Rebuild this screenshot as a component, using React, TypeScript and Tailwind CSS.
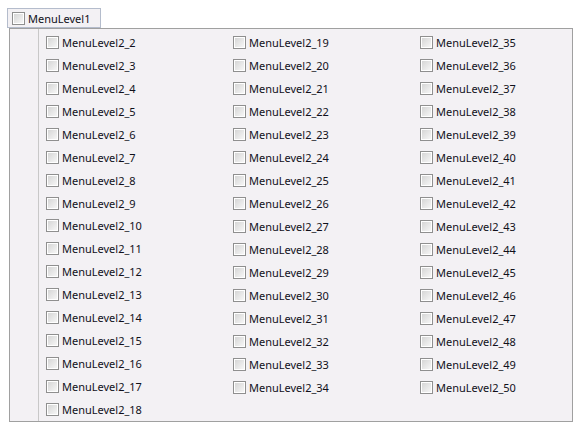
import React from "react";

const columns: number[][] = [
  Array.from({ length: 17 }, (_, i) => i + 2),
  Array.from({ length: 16 }, (_, i) => i + 19),
  Array.from({ length: 16 }, (_, i) => i + 35),
];

function Box() {
  return (
    <span className="w-[13px] h-[13px] shrink-0 border border-[#8f8f8f] bg-white p-px">
      <span className="block w-full h-full bg-gradient-to-br from-[#d6d6d6] to-[#f6f6f6]" />
    </span>
  );
}

function Item({ label }: { label: string }) {
  return (
    <div className="h-[23px] flex items-center gap-[3px]">
      <Box />
      <span className="text-[11px] leading-none text-[#10101a]">{label}</span>
    </div>
  );
}

export default function App() {
  return (
    <div className="w-[582px] h-[434px] bg-white relative font-['Noto_Sans',sans-serif]">
      <div className="pt-[8px] pl-[7px]">
        <div className="relative z-10 w-[94px] h-[20px] border border-[#b4bccc] bg-[#f3f1f4] flex items-center pl-[4px] gap-[3px]">
          <Box />
          <span className="text-[11px] leading-none text-[#10101a]">MenuLevel1</span>
        </div>
      </div>
      <div className="ml-[9px] w-[564px] h-[394px] border border-[#a0a0a0] bg-[#f3f1f4] flex">
        <div className="w-[29px] shrink-0 border-r border-[#c8c8c8]" />
        <div className="flex flex-1 min-w-0 pt-[2px] pl-[7px]">
          {columns.map((col, ci) => (
            <div key={ci} className={ci < 2 ? "w-[187px] shrink-0 flex flex-col" : "flex-1 flex flex-col"}>
              {col.map((n) => (
                <Item key={n} label={`MenuLevel2_${n}`} />
              ))}
            </div>
          ))}
        </div>
      </div>
    </div>
  );
}
